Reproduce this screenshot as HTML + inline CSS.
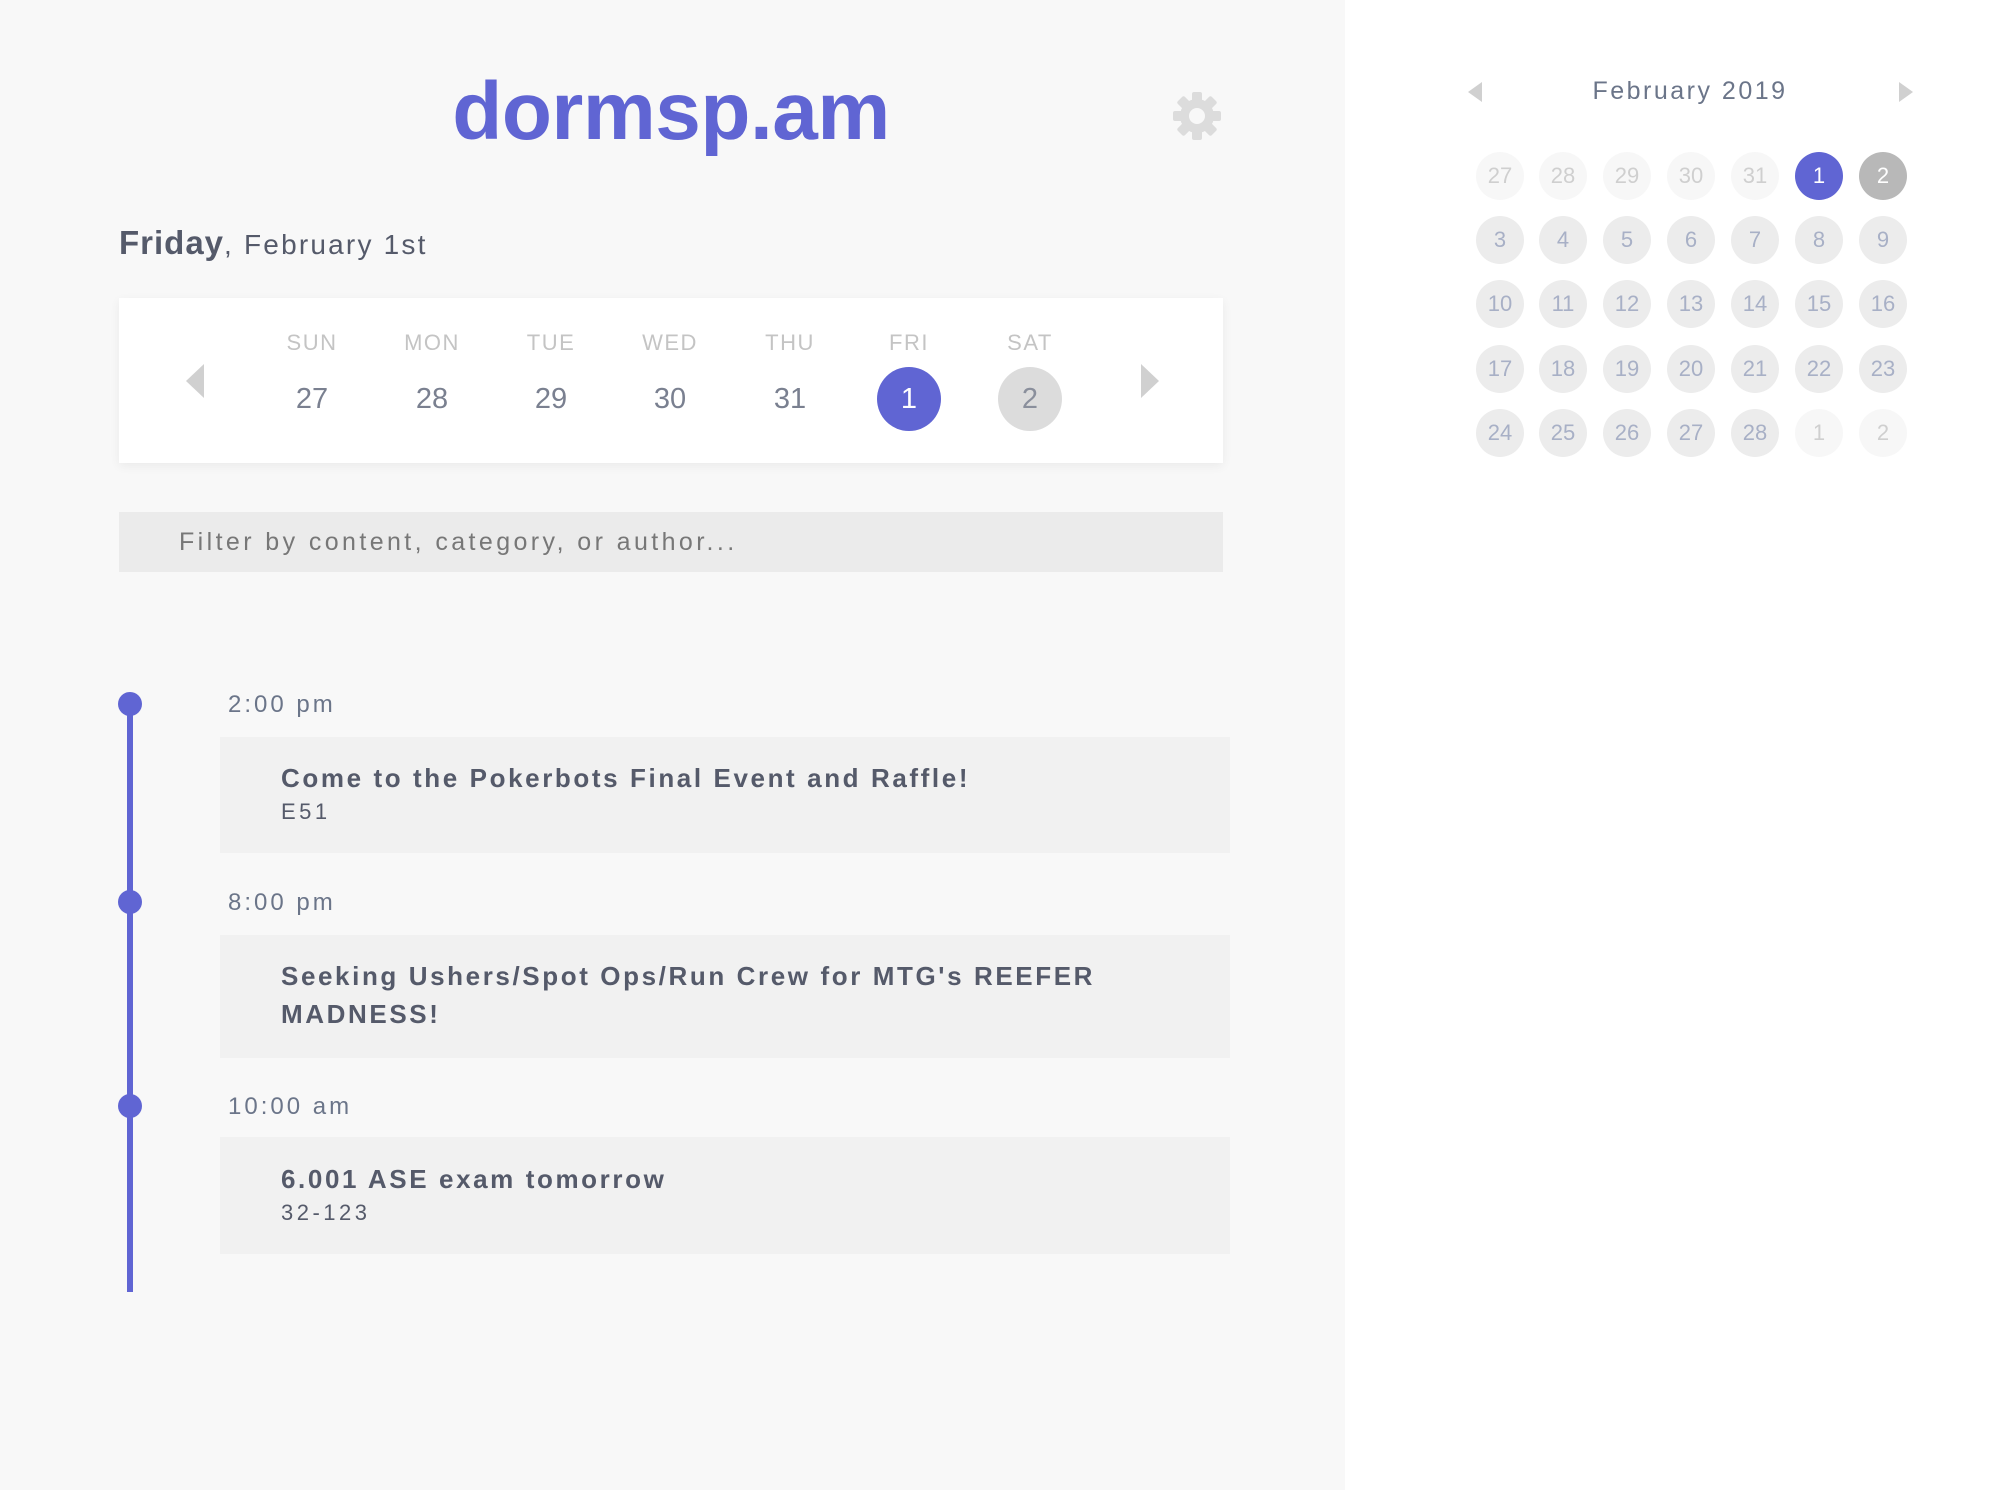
<!DOCTYPE html>
<html><head><meta charset="utf-8"><style>
*{margin:0;padding:0;box-sizing:border-box}
body{width:2002px;height:1490px;background:#fff;font-family:"Liberation Sans",sans-serif;position:relative;overflow:hidden}
#left{position:absolute;left:0;top:0;width:1345px;height:1490px;background:#f8f8f8}
.abs{position:absolute}
.logo{left:0;width:1342px;text-align:center;top:62px;font-size:82px;font-weight:bold;color:#6065d3;line-height:100px;letter-spacing:-0.5px}
.date{left:119px;top:224px;color:#555a6a;font-size:28px;letter-spacing:2.2px}
.date b{font-size:33px;letter-spacing:1px}
.week{left:119px;top:298px;width:1104px;height:165px;background:#fff;box-shadow:0 3px 10px rgba(0,0,0,0.06)}
.col{position:absolute;width:100px;margin-left:-50px;text-align:center}
.lab{top:330px;font-size:22px;color:#c4c4c4;letter-spacing:1.5px}
.num{top:367px;height:64px;line-height:64px;font-size:29px;color:#7a8090}
.cir{width:64px;height:64px;margin-left:-32px;border-radius:50%}
.filter{left:119px;top:512px;width:1104px;height:60px;background:#ebebeb;color:#777;font-size:25px;letter-spacing:3.4px;padding-left:60px;line-height:60px}
.line{left:127px;top:704px;width:6px;height:588px;background:#6065d3}
.dot{left:118px;width:24px;height:24px;border-radius:50%;background:#6065d3}
.time{left:228px;font-size:24px;color:#6b7589;letter-spacing:3px}
.card{left:220px;width:1010px;background:#f1f1f1;padding-left:61px;color:#555a6a}
.card .t{font-size:26px;font-weight:bold;letter-spacing:2.6px;line-height:38px}
.card .s{font-size:22px;letter-spacing:3.5px;line-height:30px}
.cal{font-size:22px;text-align:center;line-height:48px}
.cd{position:absolute;width:48px;height:48px;margin-left:-24px;margin-top:-24px;border-radius:50%;background:#ececec;color:#a8b0c6}
.cd.o{background:#f7f7f7;color:#cfcfcf}
</style></head><body>
<div id="left"></div>
<div class="abs logo">dormsp.am</div>
<svg class="abs" style="left:1173px;top:92px" width="48" height="48" viewBox="-24 -24 48 48">
<g fill="#dcdcdc">
<circle r="17"/>
<g id="t"><rect x="-5" y="-24" width="10" height="10" rx="2"/></g>
<use href="#t" transform="rotate(45)"/><use href="#t" transform="rotate(90)"/><use href="#t" transform="rotate(135)"/><use href="#t" transform="rotate(180)"/><use href="#t" transform="rotate(225)"/><use href="#t" transform="rotate(270)"/><use href="#t" transform="rotate(315)"/>
</g><circle r="8" fill="#f8f8f8"/></svg>
<div class="abs date"><b>Friday</b>, February 1st</div>
<div class="abs week"></div>
<svg class="abs" style="left:186px;top:364px" width="18" height="34"><polygon points="18,0 18,34 0,17" fill="#d0d0d0"/></svg>
<svg class="abs" style="left:1141px;top:364px" width="18" height="34"><polygon points="0,0 0,34 18,17" fill="#d0d0d0"/></svg>
<div class="abs col lab" style="left:312px">SUN</div><div class="abs col num" style="left:312px">27</div>
<div class="abs col lab" style="left:432px">MON</div><div class="abs col num" style="left:432px">28</div>
<div class="abs col lab" style="left:551px">TUE</div><div class="abs col num" style="left:551px">29</div>
<div class="abs col lab" style="left:670px">WED</div><div class="abs col num" style="left:670px">30</div>
<div class="abs col lab" style="left:790px">THU</div><div class="abs col num" style="left:790px">31</div>
<div class="abs col lab" style="left:909px">FRI</div><div class="abs col num cir" style="left:909px;background:#6065d3;color:#fff">1</div>
<div class="abs col lab" style="left:1030px">SAT</div><div class="abs col num cir" style="left:1030px;background:#dcdcdc;color:#8a8f9c">2</div>
<div class="abs filter">Filter by content, category, or author...</div>
<div class="abs line"></div>
<div class="abs dot" style="top:692px"></div>
<div class="abs dot" style="top:890px"></div>
<div class="abs dot" style="top:1094px"></div>
<div class="abs time" style="top:691px">2:00 pm</div>
<div class="abs time" style="top:889px">8:00 pm</div>
<div class="abs time" style="top:1093px">10:00 am</div>
<div class="abs card" style="top:737px;height:116px;padding-top:22px"><div class="t">Come to the Pokerbots Final Event and Raffle!</div><div class="s">E51</div></div>
<div class="abs card" style="top:935px;height:123px;padding-top:22px"><div class="t">Seeking Ushers/Spot Ops/Run Crew for MTG's REEFER<br>MADNESS!</div></div>
<div class="abs card" style="top:1137px;height:117px;padding-top:23px"><div class="t">6.001 ASE exam tomorrow</div><div class="s">32-123</div></div>

<div class="abs" style="left:1490px;top:77px;width:400px;text-align:center;font-size:25px;color:#6b7589;letter-spacing:2.5px">February 2019</div>
<svg class="abs" style="left:1468px;top:82px" width="14" height="20"><polygon points="14,0 14,20 0,10" fill="#d0d0d0"/></svg>
<svg class="abs" style="left:1899px;top:82px" width="14" height="20"><polygon points="0,0 0,20 14,10" fill="#d0d0d0"/></svg>
<div class="abs cal" style="left:-2px;top:1px">
<div class="cd o" style="left:1502px;top:175px">27</div><div class="cd o" style="left:1565px;top:175px">28</div><div class="cd o" style="left:1629px;top:175px">29</div><div class="cd o" style="left:1693px;top:175px">30</div><div class="cd o" style="left:1757px;top:175px">31</div><div class="cd" style="left:1821px;top:175px;background:#6065d3;color:#fff">1</div><div class="cd" style="left:1885px;top:175px;background:#b8b8b8;color:#fff">2</div>
<div class="cd" style="left:1502px;top:239px">3</div><div class="cd" style="left:1565px;top:239px">4</div><div class="cd" style="left:1629px;top:239px">5</div><div class="cd" style="left:1693px;top:239px">6</div><div class="cd" style="left:1757px;top:239px">7</div><div class="cd" style="left:1821px;top:239px">8</div><div class="cd" style="left:1885px;top:239px">9</div>
<div class="cd" style="left:1502px;top:303px">10</div><div class="cd" style="left:1565px;top:303px">11</div><div class="cd" style="left:1629px;top:303px">12</div><div class="cd" style="left:1693px;top:303px">13</div><div class="cd" style="left:1757px;top:303px">14</div><div class="cd" style="left:1821px;top:303px">15</div><div class="cd" style="left:1885px;top:303px">16</div>
<div class="cd" style="left:1502px;top:368px">17</div><div class="cd" style="left:1565px;top:368px">18</div><div class="cd" style="left:1629px;top:368px">19</div><div class="cd" style="left:1693px;top:368px">20</div><div class="cd" style="left:1757px;top:368px">21</div><div class="cd" style="left:1821px;top:368px">22</div><div class="cd" style="left:1885px;top:368px">23</div>
<div class="cd" style="left:1502px;top:432px">24</div><div class="cd" style="left:1565px;top:432px">25</div><div class="cd" style="left:1629px;top:432px">26</div><div class="cd" style="left:1693px;top:432px">27</div><div class="cd" style="left:1757px;top:432px">28</div><div class="cd o" style="left:1821px;top:432px">1</div><div class="cd o" style="left:1885px;top:432px">2</div>
</div>
</body></html>
